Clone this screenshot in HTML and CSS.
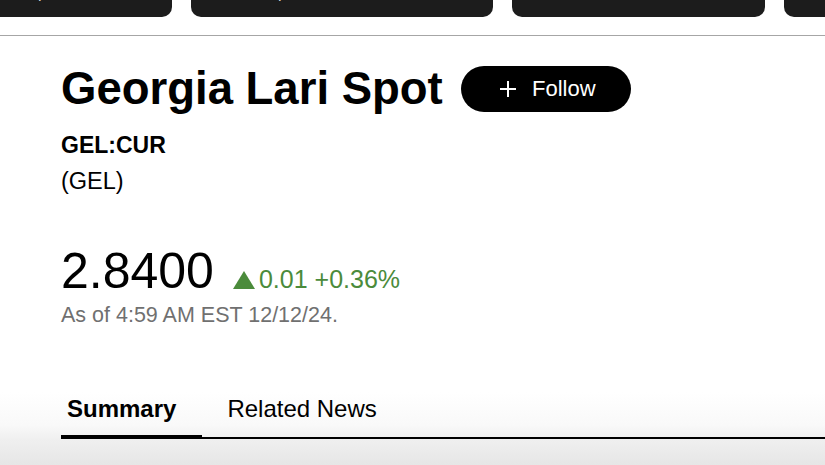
FILE: index.html
```html
<!DOCTYPE html>
<html lang="en">
<head>
<meta charset="utf-8">
<title>Georgia Lari Spot</title>
<link rel="stylesheet" href="styles.css">
</head>
<body>
<div class="ticker-strip">
  <div class="tcard tcard-first"><span class="tline">Gold Spot 2,712.40</span></div>
  <div class="tcard tcard-wide"><span class="tline">Dollar Spot, <span class="tup">+0.12%</span></span></div>
  <div class="tcard tcard-mid"><span class="tline">EUR USD <span class="tdown">-0.21%</span></span></div>
  <div class="tcard tcard-last"><span class="tline">Brent</span></div>
</div>
<main class="quote">
  <div class="title-row">
    <h1 class="title">Georgia Lari Spot</h1>
    <button class="follow" type="button">
      <svg class="plus" width="18" height="18" viewBox="0 0 18 18" aria-hidden="true">
        <path d="M9 1v16M1 9h16" stroke="#fff" stroke-width="2" fill="none"/>
      </svg>
      <span>Follow</span>
    </button>
  </div>
  <div class="symbol">GEL:CUR</div>
  <div class="ccy">(GEL)</div>
  <div class="price-row">
    <span class="price">2.8400</span>
    <span class="change">
      <svg class="tri" width="22" height="18" viewBox="0 0 22 18" aria-hidden="true">
        <path d="M11 0L22 18H0Z" fill="#4b8b3b"/>
      </svg>0.01 +0.36%</span>
  </div>
  <div class="asof">As of 4:59 AM EST 12/12/24.</div>
  <nav class="tabs">
    <div class="tab tab-active">Summary</div>
    <div class="tab">Related News</div>
  </nav>
</main>
</body>
</html>
```
FILE: styles.css
```css
html, body {
  margin: 0;
  padding: 0;
  height: 465px;
  overflow: hidden;
}
body {
  font-family: "Liberation Sans", Arial, sans-serif;
  color: #000;
  background: linear-gradient(to bottom, #ffffff 0, #ffffff 392px, #f9f9f9 425px, #efefef 440px, #e6e6e6 465px);
}

.ticker-strip {
  height: 35px;
  border-bottom: 1px solid #a6a6a6;
  display: flex;
  align-items: flex-start;
  gap: 19px;
  overflow: hidden;
}
.tcard {
  flex: none;
  height: 17px;
  background: #1c1c1c;
  border-radius: 0 0 10px 10px;
  overflow: hidden;
  padding-left: 30px;
  box-sizing: border-box;
  color: #d8d8d8;
  font-size: 16px;
}
.tcard-first { width: 213px; margin-left: -41px; }
.tcard-wide { width: 302px; }
.tcard-mid { width: 253px; padding-left: 18px; }
.tcard-last { width: 120px; }
.tline {
  display: block;
  line-height: 18px;
  margin-top: -16px;
  white-space: nowrap;
}
.tup { color: #2f6f2f; margin-left: 80px; }
.tdown { color: #8a2a2a; margin-left: 70px; }

.quote {
  padding-left: 61px;
}
.title-row {
  display: flex;
  align-items: center;
  gap: 18px;
  margin-top: 30px;
  height: 46px;
}
.title {
  margin: 0;
  font-size: 45.5px;
  font-weight: 700;
  line-height: 46px;
  white-space: nowrap;
}
.follow {
  width: 170px;
  height: 46px;
  border: none;
  border-radius: 23px;
  background: #000;
  color: #fff;
  display: flex;
  align-items: center;
  justify-content: center;
  gap: 15px;
  padding: 0 0 0 3px;
  font-family: "Liberation Sans", Arial, sans-serif;
  font-size: 22px;
  cursor: pointer;
}
.plus { display: block; }

.symbol {
  margin-top: 15px;
  font-size: 23px;
  font-weight: 700;
  line-height: 36px;
}
.ccy {
  font-size: 23.5px;
  line-height: 36px;
}

.price-row {
  display: flex;
  align-items: baseline;
  margin-top: 44px;
}
.price {
  font-size: 50px;
  line-height: 56px;
}
.change {
  margin-left: 19px;
  font-size: 25px;
  color: #4b8b3b;
}
.tri {
  margin-right: 4px;
  vertical-align: 0;
  position: relative;
  top: 1px;
}
.asof {
  margin-top: 3px;
  font-size: 21.5px;
  line-height: 26px;
  color: #707070;
}

.tabs {
  display: flex;
  margin-top: 66px;
  border-bottom: 2px solid #000;
}
.tab {
  padding: 0 26px 11px 25px;
  font-size: 24px;
  line-height: 30px;
  border-bottom: 4px solid transparent;
  margin-bottom: -2px;
}
.tab-active {
  padding-left: 6px;
  font-weight: 700;
  border-bottom-color: #000;
}
```
